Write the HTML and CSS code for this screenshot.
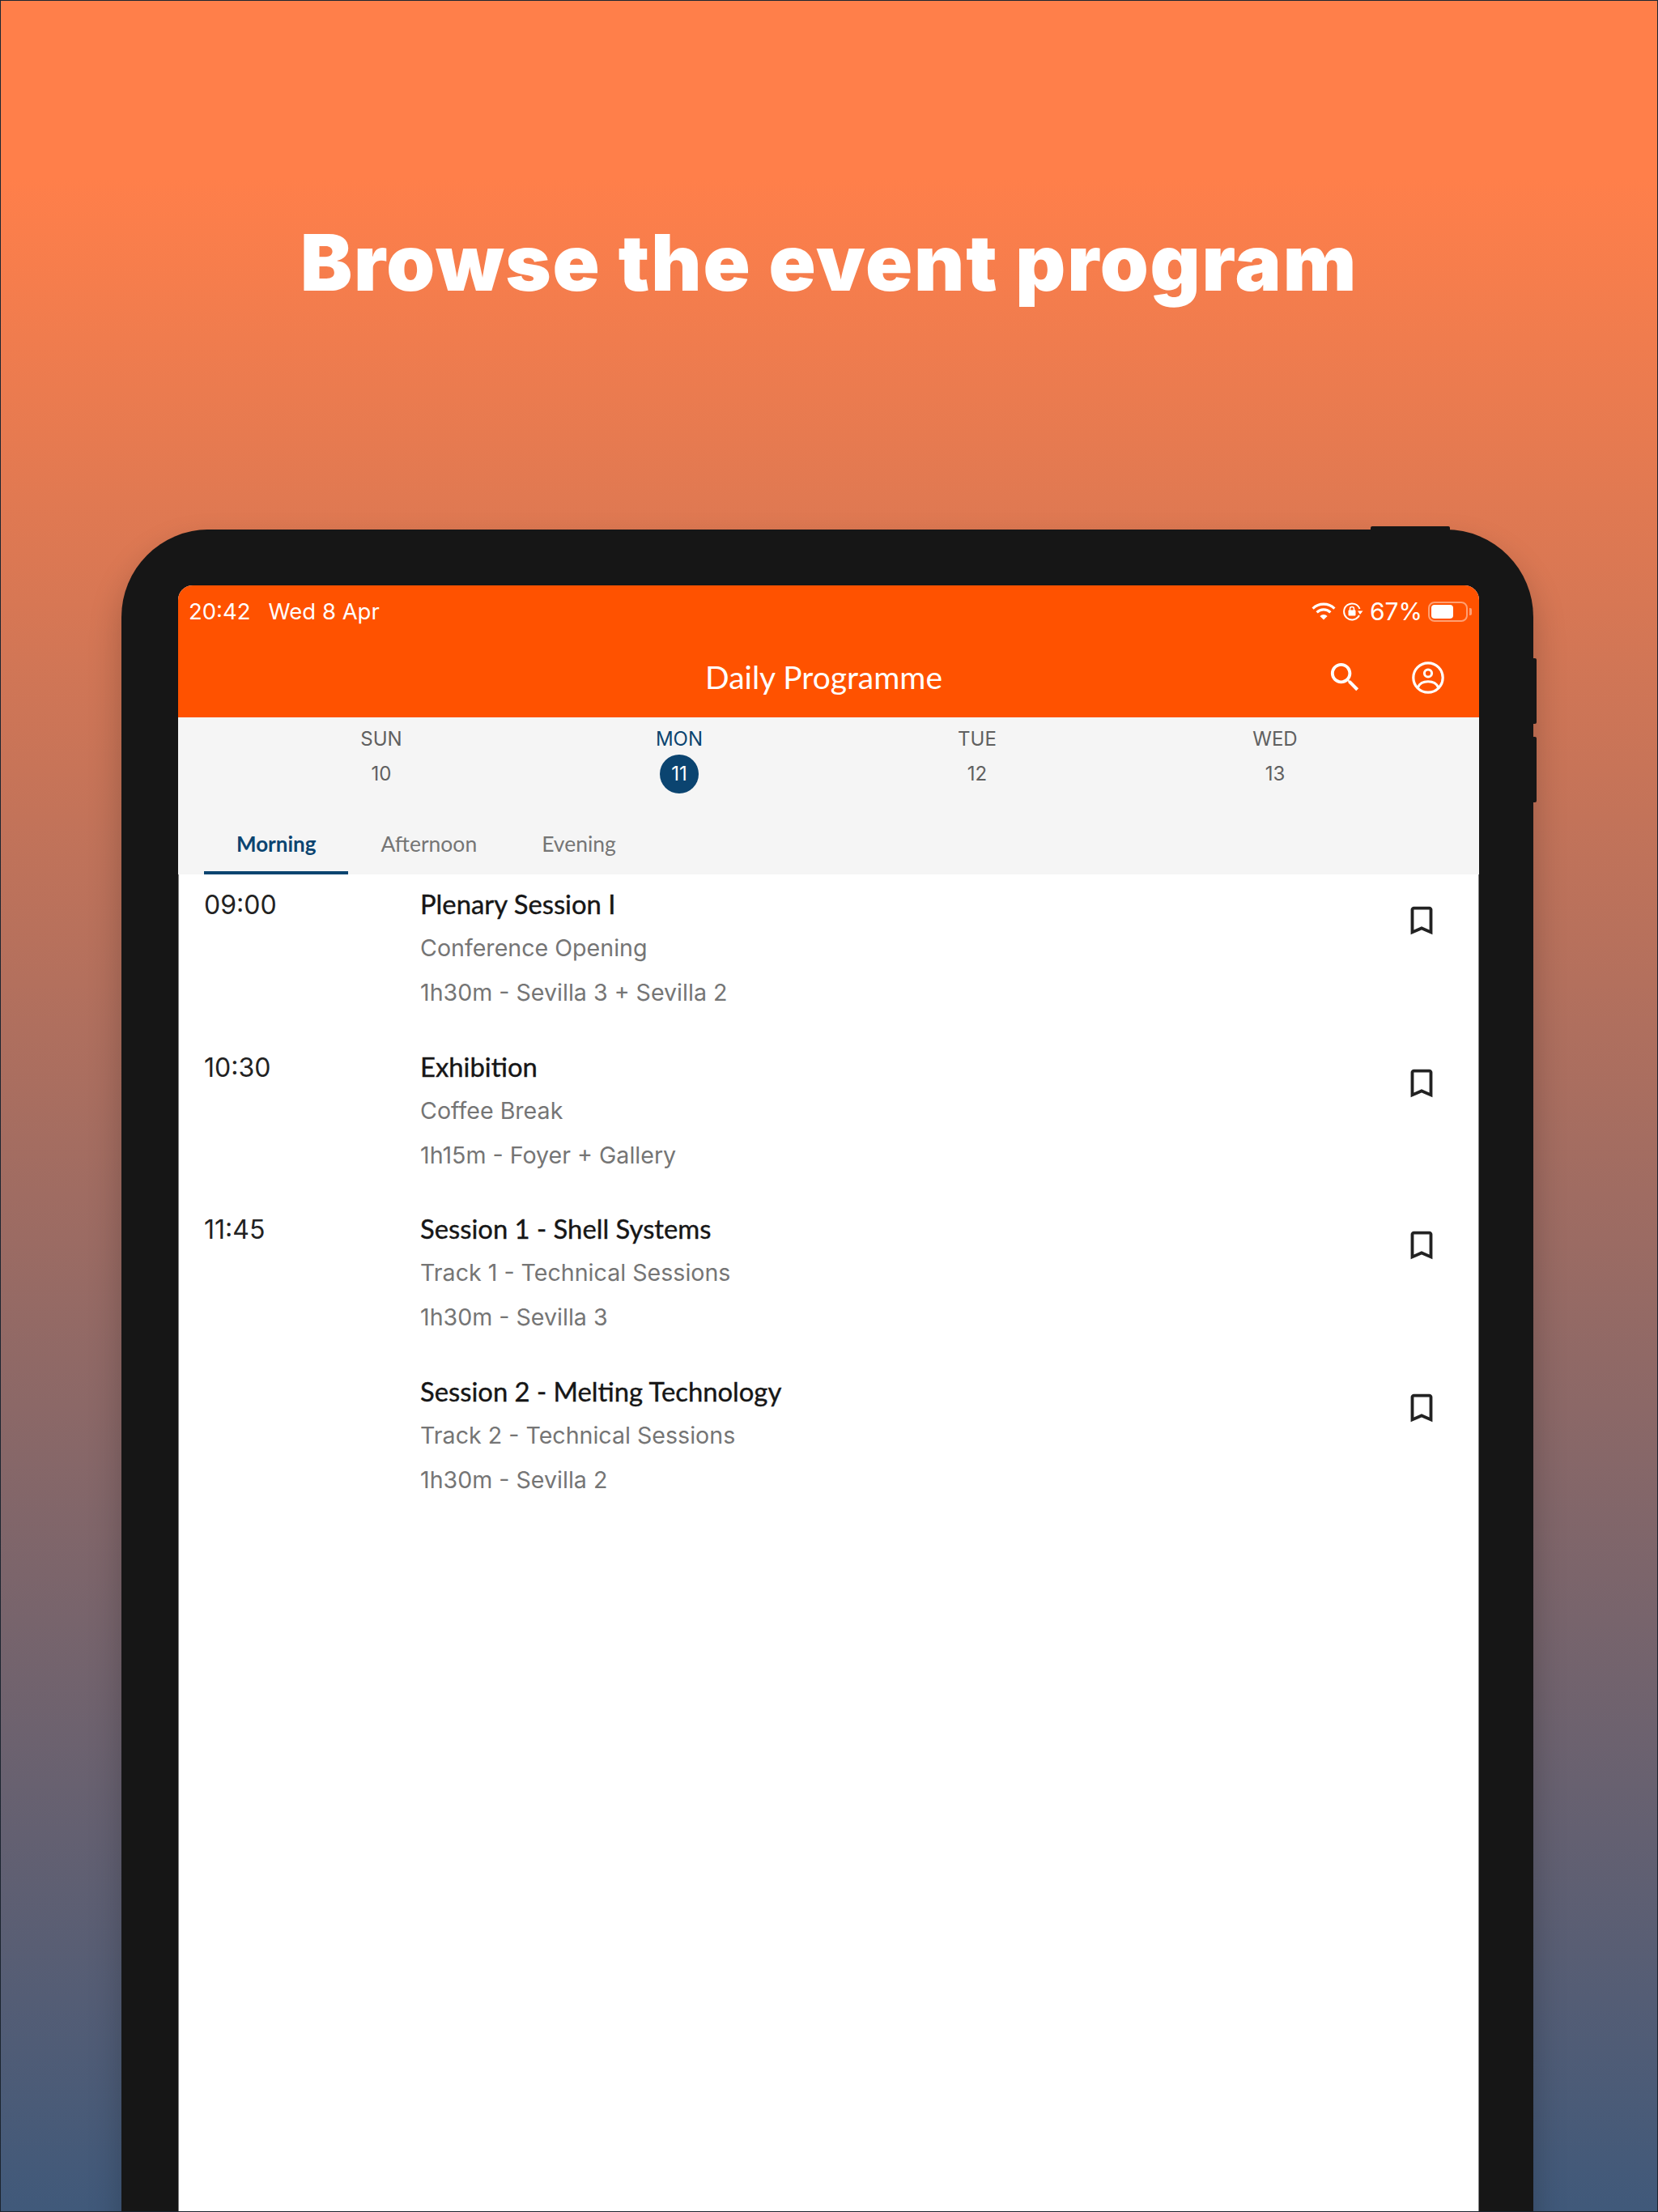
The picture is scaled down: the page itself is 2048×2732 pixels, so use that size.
FILE: index.html
```html
<!DOCTYPE html>
<html lang="en">
<head>
    <meta charset="UTF-8">
    <meta name="viewport" content="width=device-width, initial-scale=1.0">
    <title>Browse the event program</title>
    <link rel="stylesheet" href="styles.css">
</head>
<body>
    <div class="poster">
        <h1 class="headline">Browse the event program</h1>

        <div class="tablet">
            <span class="hw-top"></span>
            <span class="hw-volume hw-up"></span>
            <span class="hw-volume hw-down"></span>

            <div class="screen">
                <header class="app-header">
                    <div class="status-bar">
                        <span class="status-clock">20:42</span>
                        <span class="status-date">Wed 8 Apr</span>
                        <span class="status-right">
                            <svg class="icon-wifi" viewBox="0 0 30 22" width="30" height="22">
                                <path d="M15 21.5l-4.6-4.6a6.6 6.6 0 0 1 9.2 0z" fill="#fff"/>
                                <path d="M1.6 7.6a19 19 0 0 1 26.8 0M6.6 12.4a12 12 0 0 1 16.8 0" fill="none" stroke="#fff" stroke-width="3.2"/>
                            </svg>
                            <svg class="icon-lock" viewBox="0 0 26 24" width="26" height="24">
                                <path d="M21.5 9A10 10 0 1 0 21 17" fill="none" stroke="#fff" stroke-width="2"/>
                                <path d="M19 11.5h6.5L22 16z" fill="#fff"/>
                                <rect x="7.5" y="10.5" width="9" height="7" rx="1" fill="#fff"/>
                                <path d="M9.5 11V9a2.5 2.5 0 0 1 5 0v2" fill="none" stroke="#fff" stroke-width="1.5"/>
                            </svg>
                            <span class="status-pct">67%</span>
                            <span class="battery"><span class="battery-fill"></span></span>
                            <span class="battery-cap"></span>
                        </span>
                    </div>
                    <div class="toolbar">
                        <span class="toolbar-title">Daily Programme</span>
                        <svg class="icon-search" viewBox="0 0 24 24" width="47" height="47">
                            <path fill="#fff" d="M15.5 14h-.79l-.28-.27C15.41 12.59 16 11.11 16 9.5 16 5.91 13.09 3 9.5 3S3 5.91 3 9.5 5.91 16 9.5 16c1.61 0 3.09-.59 4.23-1.57l.27.28v.79l5 4.99L20.49 19l-4.99-5zm-6 0C7.01 14 5 11.99 5 9.5S7.01 5 9.5 5 14 7.01 14 9.5 11.99 14 9.5 14z"/>
                        </svg>
                        <svg class="icon-account" viewBox="0 0 40 40" width="40" height="40">
                            <circle cx="20" cy="20" r="18.2" fill="none" stroke="#fff" stroke-width="3.2"/>
                            <circle cx="20" cy="14.5" r="4.6" fill="none" stroke="#fff" stroke-width="3"/>
                            <path d="M7.5 32c2-5 7-7.2 12.5-7.2s10.5 2.2 12.5 7.2" fill="none" stroke="#fff" stroke-width="3"/>
                        </svg>
                    </div>
                </header>

                <div class="schedule-nav">
                    <div class="days">
                        <div class="day">
                            <span class="day-name">SUN</span>
                            <span class="day-num">10</span>
                        </div>
                        <div class="day day-active">
                            <span class="day-name">MON</span>
                            <span class="day-num">11</span>
                        </div>
                        <div class="day">
                            <span class="day-name">TUE</span>
                            <span class="day-num">12</span>
                        </div>
                        <div class="day">
                            <span class="day-name">WED</span>
                            <span class="day-num">13</span>
                        </div>
                    </div>
                    <div class="tabs">
                        <span class="tab tab-active">Morning</span>
                        <span class="tab">Afternoon</span>
                        <span class="tab">Evening</span>
                    </div>
                </div>

                <div class="sessions">
                    <div class="session">
                        <span class="session-time">09:00</span>
                        <div class="session-body">
                            <div class="session-title">Plenary Session I</div>
                            <div class="session-sub">Conference Opening</div>
                            <div class="session-meta">1h30m - Sevilla 3 + Sevilla 2</div>
                        </div>
                        <svg class="icon-bookmark" viewBox="0 0 24 24" width="46" height="46"><path d="M17 3H7c-1.1 0-2 .9-2 2v16l7-3 7 3V5c0-1.1-.9-2-2-2zm0 15l-5-2.18L7 18V5h10v13z"/></svg>
                    </div>
                    <div class="session">
                        <span class="session-time">10:30</span>
                        <div class="session-body">
                            <div class="session-title">Exhibition</div>
                            <div class="session-sub">Coffee Break</div>
                            <div class="session-meta">1h15m - Foyer + Gallery</div>
                        </div>
                        <svg class="icon-bookmark" viewBox="0 0 24 24" width="46" height="46"><path d="M17 3H7c-1.1 0-2 .9-2 2v16l7-3 7 3V5c0-1.1-.9-2-2-2zm0 15l-5-2.18L7 18V5h10v13z"/></svg>
                    </div>
                    <div class="session">
                        <span class="session-time">11:45</span>
                        <div class="session-body">
                            <div class="session-title">Session 1 - Shell Systems</div>
                            <div class="session-sub">Track 1 - Technical Sessions</div>
                            <div class="session-meta">1h30m - Sevilla 3</div>
                        </div>
                        <svg class="icon-bookmark" viewBox="0 0 24 24" width="46" height="46"><path d="M17 3H7c-1.1 0-2 .9-2 2v16l7-3 7 3V5c0-1.1-.9-2-2-2zm0 15l-5-2.18L7 18V5h10v13z"/></svg>
                    </div>
                    <div class="session">
                        <span class="session-time"></span>
                        <div class="session-body">
                            <div class="session-title">Session 2 - Melting Technology</div>
                            <div class="session-sub">Track 2 - Technical Sessions</div>
                            <div class="session-meta">1h30m - Sevilla 2</div>
                        </div>
                        <svg class="icon-bookmark" viewBox="0 0 24 24" width="46" height="46"><path d="M17 3H7c-1.1 0-2 .9-2 2v16l7-3 7 3V5c0-1.1-.9-2-2-2zm0 15l-5-2.18L7 18V5h10v13z"/></svg>
                    </div>
                </div>
            </div>
        </div>
    </div>
</body>
</html>
```

FILE: styles.css
```css
* {
    box-sizing: border-box;
}
body {
    margin: 0;
    font-family: Inter, Roboto, sans-serif;
}
.poster {
    height: 2732px;
    overflow: hidden;
    border: 1px solid #1c2530;
    background: linear-gradient(180deg, #ff7f4a 0%, #ff7f4a 8%, #40597a 100%);
    padding-top: 258px;
}
.headline {
    margin: 0;
    height: 395px;
    text-align: center;
    color: #fff;
    font-family: Inter, sans-serif;
    font-size: 96px;
    font-weight: 900;
    letter-spacing: 1.85px;
    line-height: 130px;
}

/* device frame */
.tablet {
    position: relative;
    width: 1744px;
    height: 2200px;
    margin-left: 149px;
    padding: 69px 67px 0 70px;
    background: #161616;
    border-radius: 108px 108px 0 0;
    box-shadow: 0 20px 40px rgba(0,0,0,0.22);
}
.hw-top {
    position: absolute;
    top: -4px;
    left: 1543px;
    width: 98px;
    height: 6px;
    background: #161616;
    border-radius: 2px 2px 0 0;
}
.hw-volume {
    position: absolute;
    right: -4px;
    width: 6px;
    height: 81px;
    background: #161616;
    border-radius: 0 2px 2px 0;
}
.hw-up {
    top: 159px;
}
.hw-down {
    top: 256px;
}
.screen {
    height: 2100px;
    background: #fff;
    border-radius: 18px 18px 0 0;
    overflow: hidden;
}

/* orange header */
.app-header {
    height: 163px;
    background: #ff5200;
    color: #fff;
}
.status-bar {
    height: 64px;
    padding: 0 9px 0 13px;
    display: flex;
    align-items: center;
    font-size: 27.5px;
    line-height: 30px;
}
.status-date {
    margin-left: 22px;
}
.status-right {
    margin-left: auto;
    display: flex;
    align-items: center;
}
.icon-lock {
    margin-left: 8px;
}
.status-pct {
    margin-left: 8px;
    font-size: 30px;
}
.battery {
    margin-left: 7px;
    width: 49px;
    height: 25px;
    padding: 2px;
    border: 2px solid rgba(255,255,255,0.45);
    border-radius: 8px;
}
.battery-fill {
    display: block;
    width: 27px;
    height: 100%;
    background: #fff;
    border-radius: 4px;
}
.battery-cap {
    width: 3px;
    height: 9px;
    margin-left: 2px;
    background: rgba(255,255,255,0.45);
    border-radius: 0 2px 2px 0;
}
.toolbar {
    position: relative;
    height: 99px;
    display: flex;
    align-items: center;
    justify-content: flex-end;
    padding-right: 43px;
}
.toolbar-title {
    position: absolute;
    left: 0;
    right: 12px;
    bottom: 27px;
    text-align: center;
    font-family: Lato, sans-serif;
    font-size: 39px;
}
.icon-account {
    margin-left: 59px;
}

/* day picker + tabs */
.schedule-nav {
    height: 194px;
    background: #f5f5f5;
}
.days {
    display: grid;
    grid-template-columns: repeat(4, 368px);
    padding: 13px 0 0 67px;
}
.day {
    display: flex;
    flex-direction: column;
    align-items: center;
    color: #606060;
}
.day-name {
    font-size: 24px;
    line-height: 28px;
}
.day-num {
    width: 48px;
    height: 48px;
    margin-top: 5px;
    border-radius: 50%;
    font-size: 24px;
    line-height: 48px;
    text-align: center;
}
.day-active {
    color: #0b4470;
}
.day-active .day-num {
    background: #0b4470;
    color: #fff;
}
.tabs {
    display: flex;
    margin: 26px 0 0 32px;
}
.tab {
    height: 74px;
    padding: 0 40px;
    font-family: Lato, sans-serif;
    font-size: 26.5px;
    line-height: 72px;
    color: #757575;
}
.tab-active {
    color: #0b4470;
    font-size: 26px;
    font-weight: 700;
    border-bottom: 4px solid #0b4470;
}

/* session list */
.sessions {
    height: 1743px;
    border-left: 1px solid #808080;
    border-right: 1px solid #808080;
}
.session {
    display: flex;
    padding: 11px 0 26.5px 31px;
}
.session-time {
    width: 267px;
    font-size: 32px;
    line-height: 54px;
    color: #222;
}
.session-body {
    flex: 1;
}
.session-title {
    font-family: Lato, sans-serif;
    font-size: 32.8px;
    line-height: 52px;
    color: #161616;
    -webkit-text-stroke: 0.4px #161616;
}
.session-sub, .session-meta {
    font-size: 28.6px;
    color: #757575;
}
.session-sub {
    line-height: 55px;
}
.session-meta {
    line-height: 56px;
}
.icon-bookmark {
    margin: 23px 47px 0 0;
    fill: #222;
}
```
